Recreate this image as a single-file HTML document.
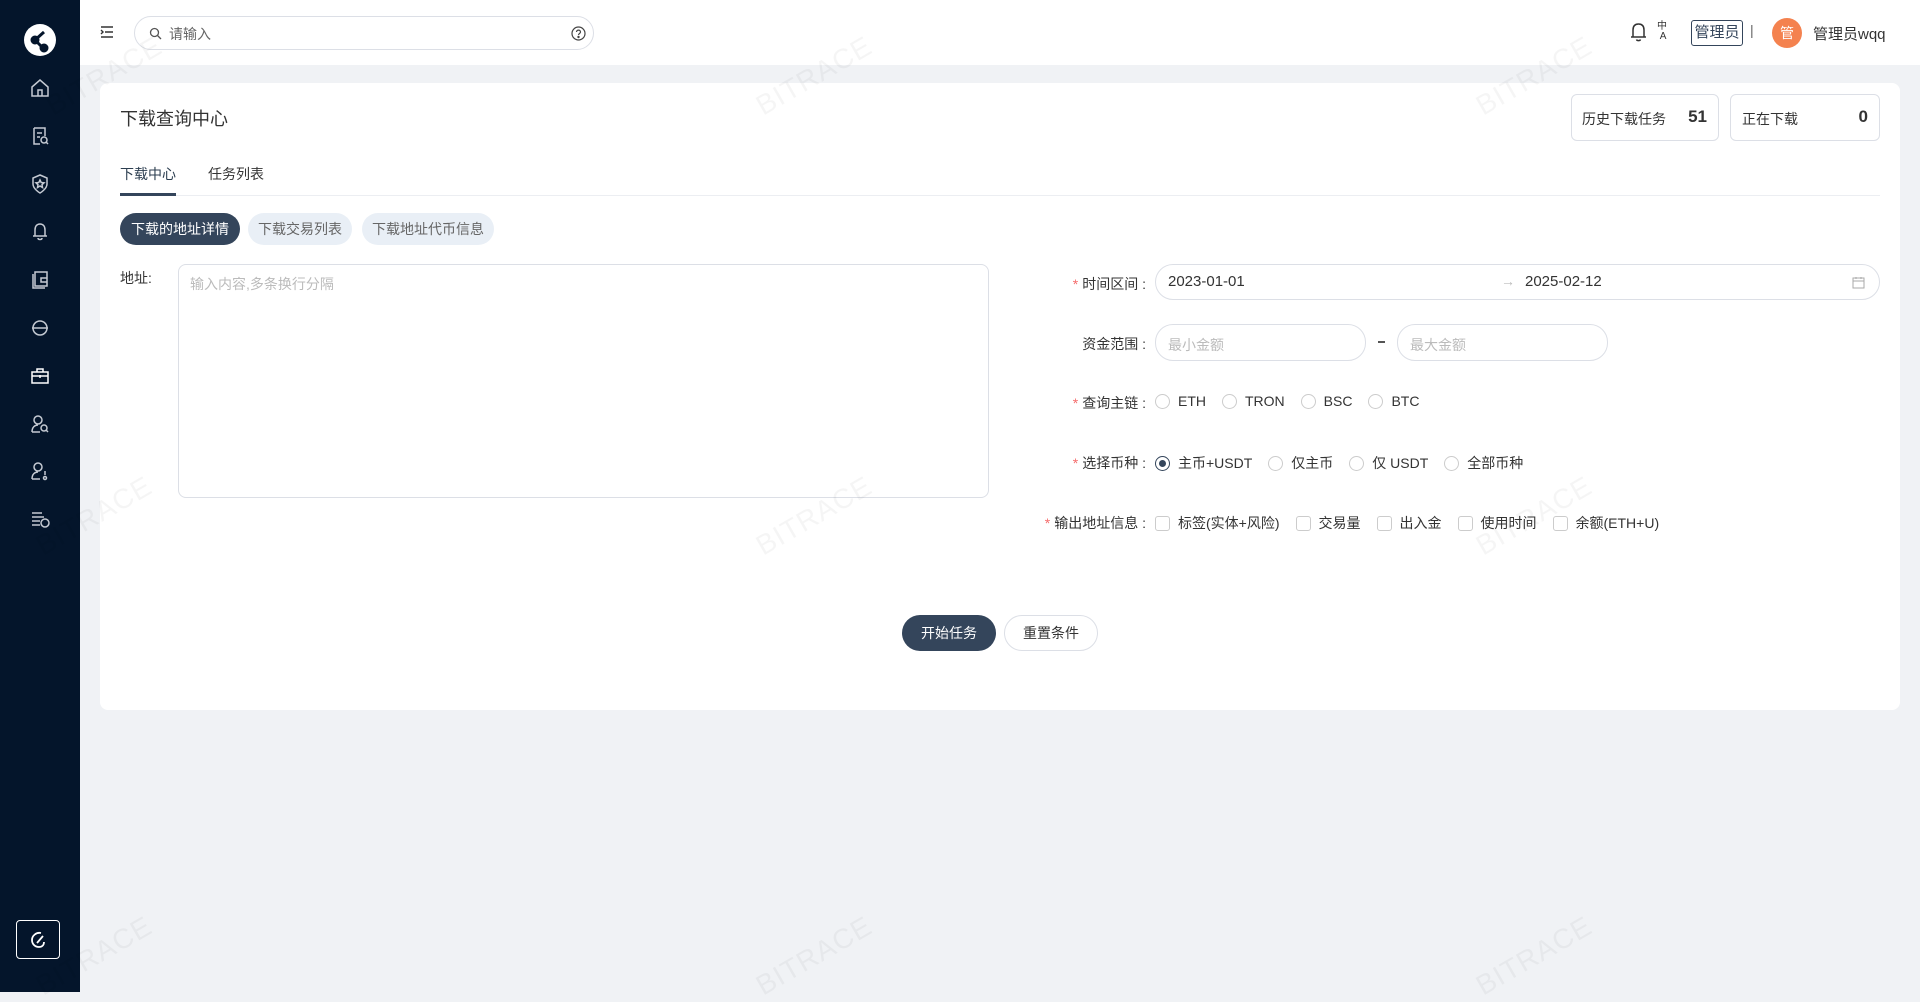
<!DOCTYPE html>
<html><head><meta charset="utf-8"><style>
*{box-sizing:border-box;margin:0;padding:0}
body{width:1920px;height:992px;background:#f0f2f5;font-family:"Liberation Sans","Noto Sans CJK SC",sans-serif;color:#333;font-size:14px;position:relative;overflow:hidden}
.side{position:absolute;left:0;top:0;width:80px;height:992px;background:#04152b}
.side svg{position:absolute;left:29px;width:22px;height:22px;fill:none;stroke:#c5cad3;stroke-width:1.5}
.hdr{position:absolute;left:80px;top:0;right:0;height:65px;background:#fff}
.abs{position:absolute}
.card{position:absolute;left:100px;top:83px;width:1800px;height:627px;background:#fff;border-radius:8px}
.inp{position:absolute;border:1px solid #dcdfe6;border-radius:18px;background:#fff}
.lbl{position:absolute;right:774px;font-size:14px;color:#333;text-align:right;white-space:nowrap}
.lbl b{color:#f56c6c;font-weight:normal;margin-right:4px}
.radio{display:inline-block;width:15px;height:15px;border:1px solid #ccc;border-radius:50%;vertical-align:-3px;margin-right:8px;position:relative}
.chk{display:inline-block;width:15px;height:15px;border:1px solid #ccc;border-radius:3px;vertical-align:-3px;margin-right:8px}
.row{position:absolute;left:1155px;font-size:14px;white-space:nowrap}
.row span.it{margin-right:16px}
.wm{position:absolute;color:rgba(0,0,0,0.04);font-size:28px;transform:rotate(-30deg);letter-spacing:1px}
</style></head><body>
<div class="side">
<div class="abs" style="left:24px;top:24px;width:32px;height:32px;border-radius:50%;background:#fff"><svg viewBox="0 0 32 32" style="left:0;top:0;width:32px;height:32px;stroke:#04152b;stroke-width:3"><path d="M20 8 L11 16 L19 24"/><circle cx="11" cy="16" r="3" fill="#04152b"/><circle cx="20" cy="24" r="3" fill="#04152b"/></svg></div>
<svg style="top:77px" viewBox="0 0 22 22"><path d="M3 10 L11 3 L19 10 V19 H3 Z M9 19 V13 H13 V19"/></svg>
<svg style="top:125px" viewBox="0 0 22 22"><path d="M5 3 H16 V11 M5 3 V19 H11 M8 8 H13 M8 12 H11"/><circle cx="15" cy="15" r="3"/><path d="M17 17 L19 19"/></svg>
<svg style="top:173px" viewBox="0 0 22 22"><path d="M11 2 L18 5 V11 C18 16 11 20 11 20 C11 20 4 16 4 11 V5 Z"/><path d="M11 7 L12.2 9.5 L15 9.8 L13 11.7 L13.5 14.5 L11 13 L8.5 14.5 L9 11.7 L7 9.8 L9.8 9.5 Z"/></svg>
<svg style="top:220px" viewBox="0 0 22 22"><path d="M6 16 V10 C6 6 8 4 11 4 C14 4 16 6 16 10 V16 Z M4 16 H18 M9 18 C9 20 13 20 13 18"/></svg>
<svg style="top:268px" viewBox="0 0 22 22"><path d="M6 4 H18 V18 H6 Z M4 6 V20 H16 M12 10 H18 V14 H12 Z"/></svg>
<svg style="top:317px" viewBox="0 0 22 22"><circle cx="11" cy="11" r="7"/><path d="M3 11 H19"/></svg>
<svg style="top:365px;stroke:#fff" viewBox="0 0 22 22"><path d="M3 7 H19 V18 H3 Z M8 7 V4 H14 V7 M3 11 H19 M11 10 V13"/></svg>
<svg style="top:413px" viewBox="0 0 22 22"><circle cx="9" cy="7" r="4"/><path d="M3 19 C3 14 6 12 9 12 M11 19 H3"/><circle cx="15" cy="15" r="3"/><path d="M17 17 L19 19"/></svg>
<svg style="top:460px" viewBox="0 0 22 22"><circle cx="9" cy="7" r="4"/><path d="M3 19 C3 14 6 12 9 12 M11 19 H3 M16 11 V15"/><circle cx="16" cy="18" r="1.5"/></svg>
<svg style="top:508px" viewBox="0 0 22 22"><path d="M3 5 H13 M3 9 H15 M3 13 H11 M3 17 H11"/><circle cx="16" cy="15" r="4"/></svg>
<div class="abs" style="left:16px;top:920px;width:44px;height:39px;border:1.5px solid #fff;border-radius:4px"><svg viewBox="0 0 22 22" style="left:10px;top:8px;width:22px;height:22px;stroke:#fff;stroke-width:1.8"><path d="M14 4 C9 3 5 7 5 11 C5 15 8 18 12 18 C15 18 17 16 17 13 M10 14 L16 7"/></svg></div>
</div>
<div class="hdr">
<svg class="abs" style="left:20px;top:25px" width="14" height="14" viewBox="0 0 14 14" fill="none" stroke="#333" stroke-width="1.4"><path d="M1 2 H13 M5 7 H13 M1 12 H13 M1 5 L3 7 L1 9"/></svg>
<div class="abs" style="left:54px;top:16px;width:460px;height:34px;border:1px solid #dcdfe6;border-radius:17px">
<svg class="abs" style="left:14px;top:10px" width="13" height="13" viewBox="0 0 13 13" fill="none" stroke="#555" stroke-width="1.3"><circle cx="5.5" cy="5.5" r="4"/><path d="M8.5 8.5 L12 12"/></svg>
<span class="abs" style="left:34px;top:7px;color:#666;font-size:14px">请输入</span>
<svg class="abs" style="left:436px;top:9px" width="15" height="15" viewBox="0 0 15 15" fill="none" stroke="#444" stroke-width="1.2"><circle cx="7.5" cy="7.5" r="6.5"/><path d="M5.5 6 C5.5 3.5 9.5 3.5 9.5 6 C9.5 7.5 7.5 7.5 7.5 9"/><circle cx="7.5" cy="11" r=".6" fill="#444"/></svg>
</div>
<svg class="abs" style="left:1549px;top:21px" width="19" height="22" viewBox="0 0 19 22" fill="none" stroke="#333" stroke-width="1.5"><path d="M4 16 V9 C4 5 6 3 9.5 3 C13 3 15 5 15 9 V16 Z M2 16 H17 M7.5 18.5 C8 20 11 20 11.5 18.5"/></svg>
<span class="abs" style="left:1577px;top:22px;font-size:10px;line-height:10px;color:#333">中<br>&nbsp;A</span>
<div class="abs" style="left:1611px;top:20px;width:52px;height:26px;border:1.3px solid #34455b;border-radius:3px;text-align:center;line-height:24px;font-size:15px;color:#34455b">管理员</div>
<span class="abs" style="left:1670px;top:22px;color:#666">|</span>
<div class="abs" style="left:1692px;top:18px;width:30px;height:30px;border-radius:50%;background:#f4824f;color:#fff;text-align:center;line-height:30px;font-size:14px">管</div>
<span class="abs" style="left:1733px;top:23px;font-size:15px;color:#333">管理员wqq</span>
</div>
<div class="card">
<div class="abs" style="left:20px;top:22px;font-size:18px;color:#333">下载查询中心</div>
<div class="abs" style="left:1471px;top:11px;width:148px;height:47px;border:1px solid #dcdfe6;border-radius:6px"><span class="abs" style="left:10px;top:14px;font-size:14px">历史下载任务</span><span class="abs" style="right:11px;top:12px;font-size:17px;font-weight:bold">51</span></div>
<div class="abs" style="left:1630px;top:11px;width:150px;height:47px;border:1px solid #dcdfe6;border-radius:6px"><span class="abs" style="left:11px;top:14px;font-size:14px">正在下载</span><span class="abs" style="right:11px;top:12px;font-size:17px;font-weight:bold">0</span></div>
<div class="abs" style="left:20px;top:81px;font-size:14px;color:#2c3e50">下载中心</div>
<div class="abs" style="left:108px;top:81px;font-size:14px;color:#333">任务列表</div>
<div class="abs" style="left:20px;top:112px;width:1760px;height:1px;background:#eceef2"></div>
<div class="abs" style="left:20px;top:110px;width:56px;height:3px;background:#34455b"></div>
<div class="abs" style="left:20px;top:130px;height:32px;padding:0 11px;border-radius:16px;background:#34455b;color:#fff;line-height:32px;font-size:14px">下载的地址详情</div>
<div class="abs" style="left:148px;top:130px;height:32px;padding:0 10px;border-radius:16px;background:#e9eff6;color:#666;line-height:32px;font-size:14px">下载交易列表</div>
<div class="abs" style="left:262px;top:130px;height:32px;padding:0 10px;border-radius:16px;background:#e9eff6;color:#666;line-height:32px;font-size:14px">下载地址代币信息</div>
<div class="abs" style="left:20px;top:185px;font-size:14px">地址:</div>
<div class="abs" style="left:78px;top:181px;width:811px;height:234px;border:1px solid #dcdfe6;border-radius:8px"><span class="abs" style="left:11px;top:9px;color:#bbb;font-size:14px">输入内容,多条换行分隔</span></div>
</div>
<div class="lbl" style="top:274px"><b>*</b>时间区间 :</div>
<div class="inp" style="left:1155px;top:264px;width:725px;height:36px"><span class="abs" style="left:12px;top:8px;font-size:15px">2023-01-01</span><span class="abs" style="left:345px;top:8px;color:#bbb">→</span><span class="abs" style="left:369px;top:8px;font-size:15px">2025-02-12</span>
<svg class="abs" style="left:696px;top:11px" width="13" height="13" viewBox="0 0 13 13" fill="none" stroke="#aaa"><rect x="1" y="2" width="11" height="10"/><path d="M1 5 H12 M4 1 V3 M9 1 V3"/></svg></div>
<div class="lbl" style="top:334px">资金范围 :</div>
<div class="inp" style="left:1155px;top:324px;width:211px;height:37px"><span class="abs" style="left:12px;top:10px;color:#bbb;font-size:14px">最小金额</span></div>
<div class="abs" style="left:1378px;top:341px;width:7px;height:2px;background:#555"></div>
<div class="inp" style="left:1397px;top:324px;width:211px;height:37px"><span class="abs" style="left:12px;top:10px;color:#bbb;font-size:14px">最大金额</span></div>
<div class="lbl" style="top:393px"><b>*</b>查询主链 :</div>
<div class="row" style="top:393px"><span class="it"><i class="radio"></i>ETH</span><span class="it"><i class="radio"></i>TRON</span><span class="it"><i class="radio"></i>BSC</span><span class="it"><i class="radio"></i>BTC</span></div>
<div class="lbl" style="top:453px"><b>*</b>选择币种 :</div>
<div class="row" style="top:453px"><span class="it"><i class="radio" style="border-color:#34455b"><i class="abs" style="left:3px;top:3px;width:7px;height:7px;border-radius:50%;background:#34455b"></i></i>主币+USDT</span><span class="it"><i class="radio"></i>仅主币</span><span class="it"><i class="radio"></i>仅 USDT</span><span class="it"><i class="radio"></i>全部币种</span></div>
<div class="lbl" style="top:513px"><b>*</b>输出地址信息 :</div>
<div class="row" style="top:513px"><span class="it"><i class="chk"></i>标签(实体+风险)</span><span class="it"><i class="chk"></i>交易量</span><span class="it"><i class="chk"></i>出入金</span><span class="it"><i class="chk"></i>使用时间</span><span class="it"><i class="chk"></i>余额(ETH+U)</span></div>
<div class="abs" style="left:902px;top:615px;width:94px;height:36px;border-radius:18px;background:#34455b;color:#fff;text-align:center;line-height:36px">开始任务</div>
<div class="abs" style="left:1004px;top:615px;width:94px;height:36px;border-radius:18px;border:1px solid #dcdfe6;background:#fff;text-align:center;line-height:34px">重置条件</div>
<div class="wm" style="left:40px;top:60px">BITRACE</div><div class="wm" style="left:750px;top:60px">BITRACE</div><div class="wm" style="left:1470px;top:60px">BITRACE</div>
<div class="wm" style="left:30px;top:500px">BITRACE</div><div class="wm" style="left:750px;top:500px">BITRACE</div><div class="wm" style="left:1470px;top:500px">BITRACE</div>
<div class="wm" style="left:30px;top:940px">BITRACE</div><div class="wm" style="left:750px;top:940px">BITRACE</div><div class="wm" style="left:1470px;top:940px">BITRACE</div>
</body></html>
